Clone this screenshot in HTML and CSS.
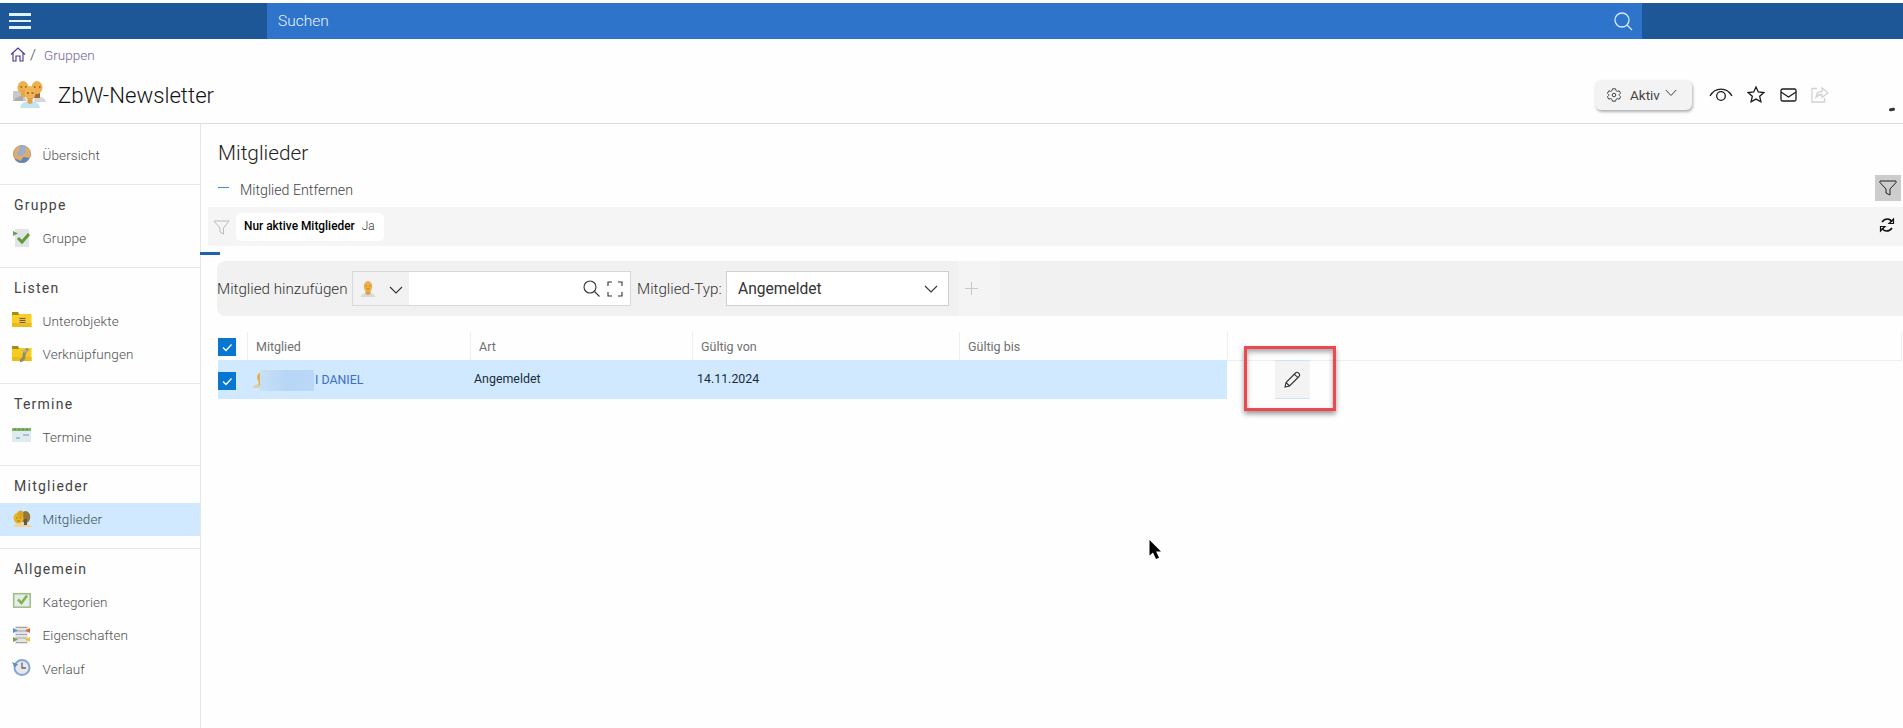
FILE: index.html
```html
<!DOCTYPE html>
<html lang="de">
<head>
  <meta charset="UTF-8" />
  <title>ZbW-Newsletter</title>
  <link rel="stylesheet" href="styles.css">
</head>
<body>
  <div class="topbar">
    <div class="menu">
      <span></span><span></span><span></span>
    </div>
    <div class="search">
      <span class="search-text">Suchen</span>
      <svg width="19" height="19" viewBox="0 0 19 19"><circle cx="8" cy="8" r="7"/><path d="M13 13l5 5"/></svg>
    </div>
  </div>

  <header class="header">
    <nav class="breadcrumb">
      <svg width="16" height="15" viewBox="0 0 16 15"><path d="M1 7.500L8 1l7 6.500M3 6v8h3V9h4v5h3V6"/></svg>
      <span class="slash">/</span>
      <a class="crumb">Gruppen</a>
    </nav>
    <div class="title-row">
      <svg class="group-icon" width="34" height="27" viewBox="0 0 34 27">
        <path d="M0 10h8l6 10H0z" fill="#c5c8cc"/>
        <path d="M1 20q2-5 9-5v5z" fill="#a9acb2"/>
        <path d="M22 15q10 0 11 6H21z" fill="#d5d7da"/>
        <rect x="21" y="12" width="6" height="5" fill="#a8653d"/>
        <ellipse cx="10" cy="6.500" rx="5.500" ry="6.500" fill="#eeb04f"/>
        <ellipse cx="24" cy="6.500" rx="5.500" ry="6.500" fill="#eeb04f"/>
        <rect x="8" y="9" width="5" height="7" fill="#e8a648"/>
        <path d="M7 27q1-7 10-7t10 7z" fill="#c5e3ee"/>
        <ellipse cx="17" cy="12" rx="5.500" ry="7" fill="#f0b656"/>
        <path d="M14.500 17h5v5l-2.500 1-2.500-1z" fill="#e2a044"/>
        <path d="M7.500 6h1.500M12 6h1.500M21 6h1.500M26 6h1.500M14 12h2M18.500 12h2" stroke="#8d5b22" stroke-width="1.500"/>
      </svg>
      <h1>ZbW-Newsletter</h1>
      <div class="actions">
        <button class="status">
          <svg class="gear" width="14" height="14" viewBox="0 0 14 14"><circle cx="7" cy="7" r="1.800"/><path d="M5.500 .8h3l.5 1.800 1.400.8 1.800-.6 1.400 2.400-1.300 1.300v1l1.300 1.300-1.400 2.400-1.800-.6-1.400.8-.5 1.800h-3L5 11.400l-1.400-.8-1.800.6L.4 8.800l1.300-1.300v-1L.4 5.200l1.400-2.400 1.800.6L5 2.600z"/></svg>
          <span>Aktiv</span>
          <svg class="chev" width="12" height="8" viewBox="0 0 12 8"><path d="M.8 1L6 6.500 11.200 1"/></svg>
        </button>
        <svg class="eye" width="24" height="14" viewBox="0 0 24 14"><circle cx="12" cy="8" r="4.300"/><path d="M1 8Q5 1.200 12 1.200T23 8"/></svg>
        <svg class="star" width="18" height="17" viewBox="0 0 18 17"><path d="M9 1l2.300 5 5.500.6-4.100 3.700 1.200 5.500L9 13.100l-4.900 2.700 1.200-5.500L1.200 6.600 6.700 6z"/></svg>
        <svg class="mail" width="17" height="14" viewBox="0 0 17 14"><rect x="1" y="1" width="15" height="12" rx="1.500"/><path d="M1 4l7.500 5L16 4"/></svg>
        <svg class="share" width="18" height="17" viewBox="0 0 18 17"><path d="M6 2.500H1v13.500h12.500V12M5 11.500q0-6 6-6V2l6 5-6 4.500V8.500Q7 8.500 5 11.500z"/></svg>
      </div>
    </div>
    <span class="speck"></span>
  </header>

  <div class="layout">
    <aside class="sidebar">
      <div class="overview">
        <a class="item">
          <svg width="20" height="20" viewBox="0 0 20 20"><circle cx="10" cy="10" r="9" fill="#e3ad66"/><path d="M9 1l5 1.500-1 3 2 3-3 1-2 3-4-1-1-3 2-1V4z" fill="#9aaed0"/><path d="M2.500 15q3-.5 6 2l3-4 4 .5 2 .5Q15 19 10 19T2.500 15z" fill="#5c84bd"/><circle cx="10" cy="10" r="8.500" fill="none" stroke="#8b8f9c" stroke-opacity=".5"/></svg>
          <span>Übersicht</span>
        </a>
      </div>
      <section class="group">
        <h3>Gruppe</h3>
        <a class="item">
          <svg width="20" height="20" viewBox="0 0 20 20"><path d="M3 1h14v18H3z" fill="#e2e5e7"/><path d="M1 3l5 2.500-5 2.500z" fill="#6f9c5c"/><path d="M6 10l4 4 7-8" fill="none" stroke="#5d9c36" stroke-width="3"/></svg>
          <span>Gruppe</span>
        </a>
      </section>
      <section class="group">
        <h3>Listen</h3>
        <a class="item">
          <svg width="20" height="20" viewBox="0 0 20 20"><path d="M0 2h6l1 2h12.500v13H0z" fill="#f8cf22"/><path d="M0 2h6l1 3H0z" fill="#a48b19"/><path d="M0 13h19.500v4H0z" fill="#edba17"/><rect x="7" y="7" width="7" height="7" fill="#e4c061"/><path d="M7.500 8.500h6M7.500 10.500h6M7.500 12.500h6" stroke="#77622c"/></svg>
          <span>Unterobjekte</span>
        </a>
        <a class="item">
          <svg width="20" height="20" viewBox="0 0 20 20"><path d="M0 2h6l1 2h12.500v13H0z" fill="#f5cc22"/><path d="M0 2h6l1 3H0z" fill="#a48b19"/><path d="M0 13h19.500v4H0z" fill="#edba17"/><path d="M8 17q4-1 4-5t4-7" fill="none" stroke="#8f8c72" stroke-width="3"/><path d="M9 6h7l-3 3z" fill="#b9b490"/></svg>
          <span>Verknüpfungen</span>
        </a>
      </section>
      <section class="group">
        <h3>Termine</h3>
        <a class="item">
          <svg width="20" height="20" viewBox="0 0 20 20"><path d="M0 3h19v13H0z" fill="#e1eaef"/><path d="M0 2h19v3H0z" fill="#82b469"/><path d="M2 3.500h2M6 3.500h2M10 3.500h2M14 3.500h2" stroke="#5f9a50" stroke-width="1.500"/><path d="M11 9h6M4 12h4" stroke="#9cc3d8" stroke-width="2"/></svg>
          <span>Termine</span>
        </a>
      </section>
      <section class="group">
        <h3>Mitglieder</h3>
        <a class="item active">
          <svg width="20" height="20" viewBox="0 0 20 20"><path d="M2 16q8-4 18 1v1H2z" fill="#f3d39a"/><ellipse cx="13.500" cy="8" rx="4.800" ry="6" fill="#95773d"/><rect x="12" y="10" width="3" height="6" fill="#67583b"/><ellipse cx="6.500" cy="9" rx="5" ry="5.500" fill="#e9b623"/><ellipse cx="8.500" cy="5" rx="3" ry="3.500" fill="#dba528"/><path d="M4 9h1.500M7.500 9H9M5 12h3" stroke="#9a701a"/></svg>
          <span>Mitglieder</span>
        </a>
      </section>
      <section class="group">
        <h3>Allgemein</h3>
        <a class="item">
          <svg width="20" height="20" viewBox="0 0 20 20"><rect x="1.700" y="2.700" width="16.500" height="13.500" fill="#e6ecea" stroke="#9fbd83" stroke-width="1.500"/><path d="M6 8.500l3.500 3.500L15 4.500" fill="none" stroke="#80b54e" stroke-width="2.500"/></svg>
          <span>Kategorien</span>
        </a>
        <a class="item">
          <svg width="20" height="20" viewBox="0 0 20 20"><path d="M3 1h13v18H3z" fill="#e4e4e4"/><path d="M4 2.500h11M4 6h11M4 9.500h11M4 13h11M4 17.500h11" stroke="#a5a5a5"/><path d="M1 3l5 2.500L1 8z" fill="#5d91cf"/><path d="M18 3l-5 2.500L18 8z" fill="#dc6347"/><path d="M1 12l5 2.500L1 17z" fill="#7ba052"/><path d="M18 12l-5 2.500 5 2.500z" fill="#ebc730"/></svg>
          <span>Eigenschaften</span>
        </a>
        <a class="item">
          <svg width="20" height="20" viewBox="0 0 20 20"><circle cx="10" cy="9.500" r="7.500" fill="#e5e8ee" stroke="#84a6d6" stroke-width="2"/><path d="M10 4.500v5.500h4" fill="none" stroke="#76615f" stroke-width="1.300"/><path d="M0 4l6 2.500-3.500 3z" fill="#5f8ac5"/></svg>
          <span>Verlauf</span>
        </a>
      </section>
    </aside>

    <main class="main">
      <h2>Mitglieder</h2>
      <div class="toolbar">
        <span class="minus"></span>
        <span class="remove">Mitglied Entfernen</span>
        <button class="filter-toggle">
          <svg width="18" height="16" viewBox="0 0 18 16"><path d="M1 1h16v1.500L11 9v6l-4-2V9L1 2.500z"/></svg>
        </button>
      </div>
      <div class="filterbar">
        <svg class="funnel" width="17" height="15" viewBox="0 0 17 15"><path d="M1 1h15L10.500 8v6L7 12V8z"/></svg>
        <div class="chip"><b>Nur aktive Mitglieder</b><span>Ja</span></div>
        <svg class="refresh" width="16" height="16" viewBox="0 0 16 16"><path d="M3 5Q5 2 8.500 2q3 0 4.500 3M13 11q-2 3-5.500 3-3 0-4.500-3"/><path class="tip" d="M14.500 2v4.500H10zM1.500 14V9.500H6z"/></svg>
      </div>
      <div class="progress"></div>

      <div class="addbar">
        <label class="add-label">Mitglied hinzufügen</label>
        <div class="picker">
          <div class="kind">
            <svg width="16" height="16" viewBox="0 0 16 16"><path d="M1 16q0-4 7-4t7 4z" fill="#d6dcda"/><path d="M5.500 8h5v5L8 14l-2.500-1z" fill="#dfa043"/><ellipse cx="8" cy="5.500" rx="4.200" ry="5.500" fill="#ecb04f"/><path d="M5.500 5H7M9 5h1.500M6.500 8h3" stroke="#b67b27"/></svg>
            <svg class="line" width="14" height="9" viewBox="0 0 14 9"><path d="M1 1l6 6 6-6"/></svg>
          </div>
          <svg class="line" width="17" height="17" viewBox="0 0 17 17"><circle cx="7" cy="7" r="6"/><path d="M11.500 11.500l5 5"/></svg>
          <svg class="line expand" width="16" height="16" viewBox="0 0 16 16"><path d="M1 5V1h4M11 1h4v4M15 11v4h-4M5 15H1v-4"/></svg>
        </div>
        <label class="type-label">Mitglied-Typ:</label>
        <div class="select">
          <span>Angemeldet</span>
          <svg class="line" width="14" height="9" viewBox="0 0 14 9"><path d="M1 1l6 6 6-6"/></svg>
        </div>
        <div class="plus">
          <svg width="13" height="13" viewBox="0 0 13 13"><path d="M6.500 0v13M0 6.500h13"/></svg>
        </div>
      </div>

      <div class="grid">
        <div class="row head">
          <div class="check"><svg width="18" height="18" viewBox="0 0 18 18"><path d="M5 9.500l3 3 5.500-6"/></svg></div>
          <div class="cell">Mitglied</div>
          <div class="cell">Art</div>
          <div class="cell">Gültig von</div>
          <div class="cell">Gültig bis</div>
          <div class="cell rest"></div>
        </div>
        <div class="row data">
          <div class="check"><svg width="18" height="18" viewBox="0 0 18 18"><path d="M5 9.500l3 3 5.500-6"/></svg></div>
          <div class="cell name">
            <svg width="8" height="16" viewBox="0 0 8 16"><path d="M0 16q0-4 7-4h1v4z" fill="#d9d3b4"/><path d="M8 0v14l-2.500-1V9Q4 8 4 5t4-5z" fill="#eab04e"/></svg>
            <span class="mask"></span>
            <a>I DANIEL</a>
          </div>
          <div class="cell">Angemeldet</div>
          <div class="cell date">14.11.2024</div>
          <div class="cell"></div>
          <div class="cell edit-cell">
            <div class="edit">
              <svg width="17" height="17" viewBox="0 0 17 17"><path d="M1 16l1-4.500L11.500 2q1.500-1.500 3.200.2t.3 3.300L5.500 15zM10.300 3.200l3.500 3.500M2 11.500L5.500 15"/></svg>
            </div>
          </div>
        </div>
      </div>
    </main>
  </div>

  <div class="highlight"></div>
  <svg class="cursor" width="13" height="20" viewBox="0 0 13 20"><path d="M.5 0v15.500l3.500-3 3 6.500 3-1.300-2.900-6.200H12z"/></svg>
</body>
</html>
```
FILE: styles.css
```css
* {
  box-sizing: border-box;
}

body {
  margin: 0;
  padding-top: 3px;
  height: 728px;
  overflow: hidden;
  position: relative;
  background: #fefefe;
  color: #333;
  font-family: Roboto, "Liberation Sans", sans-serif;
  font-weight: 300;
  font-size: 14px;
}

svg {
  display: block;
  flex: none;
  fill: none;
}

h1, h2, h3 {
  margin: 0;
  font-weight: 300;
}

button {
  border: none;
  padding: 0;
  font: inherit;
}

/* top bar */
.topbar {
  display: flex;
  height: 36px;
  background: #1e5797;
}

.menu {
  width: 267px;
  padding: 10px 9px;
  display: flex;
  flex-direction: column;
  gap: 4px;
}

.menu span {
  width: 22px;
  height: 2.500px;
  background: #e0f1ff;
}

.search {
  width: 1375px;
  padding: 0 9px 0 11px;
  display: flex;
  align-items: center;
  justify-content: space-between;
  background: #2e74ca;
  color: #e9f4ff;
  font-size: 15.500px;
}

.search svg {
  stroke: #d7eaff;
  stroke-width: 1.300;
}

/* header */
.header {
  height: 85px;
  border-bottom: 1px solid #dcdcdc;
  position: relative;
}

.breadcrumb {
  display: flex;
  align-items: center;
  height: 32px;
  padding-left: 10px;
  padding-bottom: 1px;
  font-size: 13.500px;
  color: #6f639d;
}

.breadcrumb svg {
  stroke: #45368f;
  stroke-width: 1.100;
}

.slash {
  margin-left: 4px;
  color: #444;
  font-size: 15px;
}

.crumb {
  margin-left: 8px;
}

.title-row {
  display: flex;
  align-items: center;
  height: 47px;
  padding-left: 13px;
}

h1 {
  margin-left: 11px;
  font-size: 22.200px;
  color: #111;
}

.actions {
  display: flex;
  align-items: center;
  margin-left: auto;
  padding-right: 74px;
}

.actions > svg {
  stroke: #1c1c1c;
  stroke-width: 1.300;
}

.status {
  display: flex;
  align-items: center;
  width: 97px;
  height: 30px;
  padding-left: 12px;
  border-radius: 6px;
  background: #f3f3f3;
  box-shadow: 1px 2px 3px rgba(0, 0, 0, 0.3);
  color: #444;
  font-size: 13.500px;
  font-weight: 400;
}

.status svg {
  stroke: #444;
}

.status span {
  margin: 0 5px 0 9px;
}

.status .chev {
  margin-top: -4px;
}

.eye { margin-left: 17px; }
.star { margin-left: 14px; }
.mail { margin-left: 15px; }

.actions .share {
  margin-left: 14px;
  stroke: #d2d2d2;
}

.speck {
  position: absolute;
  right: 8px;
  top: 69px;
  width: 6px;
  height: 3px;
  border-radius: 2px;
  background: #333;
  transform: rotate(-8deg);
}

/* sidebar */
.layout {
  display: flex;
  height: 604px;
}

.sidebar {
  width: 201px;
  flex: none;
  border-right: 1px solid #e6e6e6;
}

.overview {
  padding-top: 14px;
  height: 60px;
}

.item {
  display: flex;
  align-items: center;
  gap: 10.500px;
  height: 33.500px;
  padding-left: 12px;
  color: #505050;
  font-size: 13.500px;
  letter-spacing: 0.1px;
}

.item svg {
  margin-top: -1px;
}

.item.active {
  background: #d0e9fe;
  color: #3c4f5e;
}

.group {
  border-top: 1px solid #e9e9e9;
  padding-bottom: 11.500px;
}

.group h3 {
  height: 36.500px;
  padding-left: 14px;
  line-height: 40px;
  font-size: 14px;
  font-weight: 400;
  letter-spacing: 1.250px;
  color: #444;
}

/* content */
.main {
  flex: 1;
  min-width: 0;
}

h2 {
  height: 51px;
  padding: 16px 0 0 17px;
  font-size: 20.800px;
  line-height: 27px;
  color: #222;
}

.toolbar {
  display: flex;
  align-items: center;
  height: 26px;
  padding: 0 2px 0 17px;
}

.minus {
  width: 11px;
  height: 1px;
  margin-bottom: 2px;
  background: #4389dc;
}

.remove {
  margin: 3px auto 0 11px;
  font-size: 14.200px;
  color: #444;
}

.filter-toggle {
  display: flex;
  align-items: center;
  justify-content: center;
  width: 26px;
  height: 26px;
  background: #cdcdcd;
}

.filter-toggle svg {
  stroke: #222;
}

.filterbar {
  display: flex;
  align-items: center;
  height: 39px;
  margin: 6px 0 0 7px;
  padding: 0 9px 0 5px;
  background: #f5f5f5;
}

.funnel {
  margin-top: 2px;
  stroke: #bbb;
}

.chip {
  display: flex;
  align-items: center;
  width: 148px;
  height: 28px;
  margin-left: 6px;
  padding: 0 0 1px 8px;
  gap: 7px;
  border-radius: 5px;
  background: #fff;
  font-size: 11.900px;
}

.chip b {
  font-weight: 500;
  color: #000;
  white-space: nowrap;
}

.refresh {
  margin: -4px -1px 0 auto;
  stroke: #111;
  stroke-width: 1.600;
}

.refresh .tip {
  stroke-width: 1.200;
}

.progress {
  width: 20px;
  height: 3px;
  margin: 6px 0 0 -1px;
  background: #1c65ab;
}

.addbar {
  display: flex;
  align-items: center;
  height: 55px;
  margin: 6px 0 0 16px;
  border-radius: 8px 0 0 8px;
  background: #f1f1f1;
  font-size: 15.200px;
  white-space: nowrap;
}

.add-label {
  width: 135px;
}

.line {
  stroke: #333;
  stroke-width: 1.100;
}

.picker {
  display: flex;
  align-items: center;
  width: 279px;
  height: 35px;
  padding-right: 7px;
  border: 1px solid #d9d9d9;
  background: #fff;
}

.kind {
  display: flex;
  align-items: center;
  gap: 13px;
  width: 56px;
  height: 33px;
  margin-right: auto;
  padding-left: 7px;
  background: #f2f2f2;
}

.kind .line {
  margin-top: 3px;
}

.expand {
  margin-left: 7px;
}

.type-label {
  width: 95px;
  padding-left: 6px;
}

.select {
  display: flex;
  align-items: center;
  justify-content: space-between;
  width: 223px;
  height: 35px;
  padding: 1px 10px 0 11px;
  border: 1px solid #cfcfcf;
  background: #fff;
  font-size: 15.600px;
  font-weight: 400;
}

.plus {
  display: flex;
  align-items: center;
  height: 55px;
  width: 42px;
  margin-left: 9px;
  padding-left: 7px;
  background: #f4f4f4;
}

.plus svg {
  stroke: #c9c9c9;
}

/* member list */
.grid {
  margin: 16px 0 0 17px;
}

.row {
  display: grid;
  grid-template-columns: 29px 223px 222px 267px 268px 1fr;
}

.head {
  height: 28px;
  color: #707070;
  font-size: 12.500px;
  font-weight: 400;
}

.head .cell {
  padding-left: 8px;
  border-left: 1px solid #eee;
  line-height: 29px;
}

.head .rest {
  border-bottom: 1px solid #eee;
  border-right: 1px solid #eee;
  margin-right: 1px;
}

.check {
  width: 18px;
  height: 18px;
  margin-top: 6px;
  background: #0777d2;
}

.check svg {
  stroke: #fff;
  stroke-width: 1.300;
}

.data {
  height: 39px;
  background: linear-gradient(#d0e9fe, #d0e9fe) no-repeat;
  background-size: 1009px 39px;
  font-size: 12.400px;
  font-weight: 400;
  color: #1b2c3c;
}

.data .check {
  margin-top: 12px;
}

.data .cell {
  padding-left: 4px;
  line-height: 38px;
}

.data .date {
  padding-left: 5px;
}

.data .name {
  display: flex;
  align-items: center;
  padding-left: 6px;
}

.mask {
  width: 54px;
  height: 21px;
  margin: 2px 1px 0 -1px;
  background: linear-gradient(90deg, #c6e0f5, #b7d5f5 50%, #bbd8f8);
}

.name a {
  color: #3a70c6;
}

.data .edit-cell {
  padding-left: 48px;
}

.edit {
  display: flex;
  align-items: center;
  justify-content: center;
  width: 35px;
  height: 39px;
  border: solid #cfe3f4;
  border-width: 1px 0;
  background: #f3f3f3;
}

.edit svg {
  stroke: #333;
  stroke-width: 1.100;
}

/* marker over the edit button */
.highlight {
  position: absolute;
  left: 1244px;
  top: 346px;
  width: 92px;
  height: 65px;
  border: 3px solid #e9494f;
  box-shadow: 0 3px 5px rgba(0, 0, 0, 0.4), inset 0 3px 5px rgba(0, 0, 0, 0.35);
}

.cursor {
  position: absolute;
  left: 1149px;
  top: 540px;
  fill: #000;
}
```
